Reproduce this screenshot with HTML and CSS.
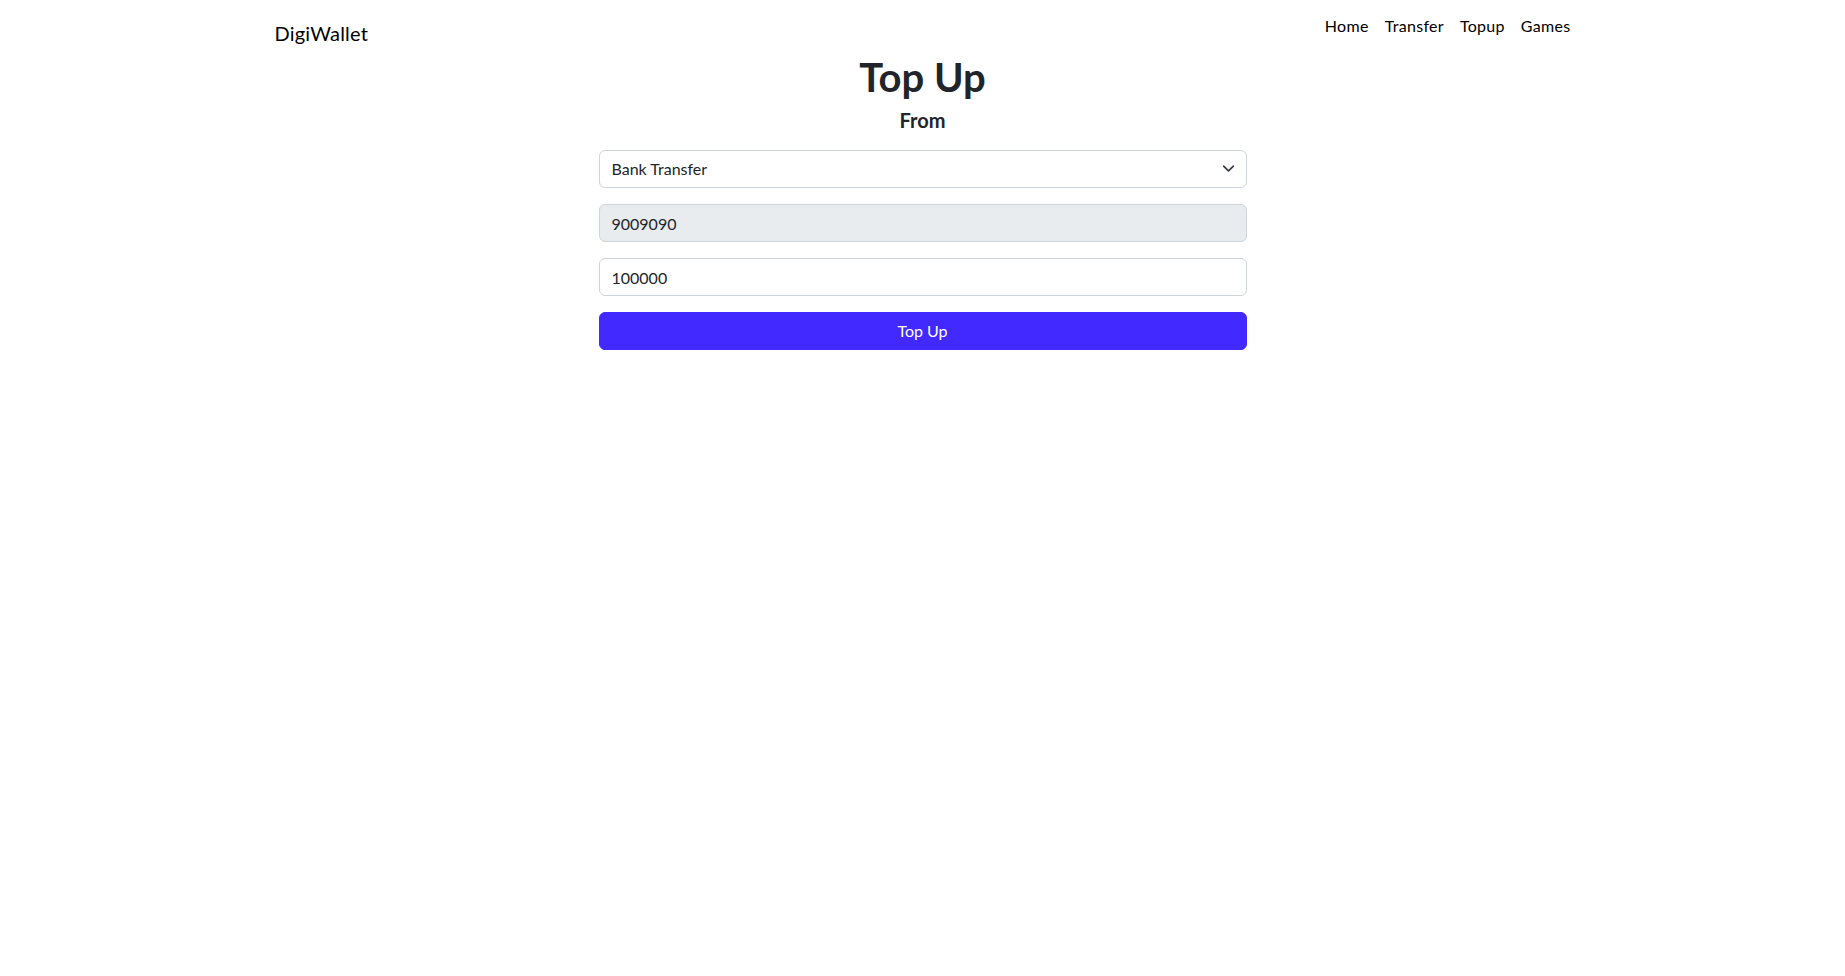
FILE: index.html
```html
<!DOCTYPE html>
<html lang="en">
<head>
<meta charset="utf-8">
<title>DigiWallet - Top Up</title>
<link rel="stylesheet" href="styles.css">
</head>
<body>
<header class="navbar">
  <div class="nav-inner">
    <a class="brand" href="#">DigiWallet</a>
    <nav class="nav-links">
      <a class="nav-link" href="#">Home</a>
      <a class="nav-link" href="#">Transfer</a>
      <a class="nav-link" href="#">Topup</a>
      <a class="nav-link" href="#">Games</a>
    </nav>
  </div>
</header>
<main class="page">
  <h1 class="title">Top Up</h1>
  <h5 class="subtitle">From</h5>
  <form class="topup-form">
    <div class="select-wrap">
      <select class="field field-select">
        <option>Bank Transfer</option>
      </select>
      <svg class="chevron" width="16" height="16" viewBox="0 0 16 16"><path d="M2 5l6 6 6-6" fill="none" stroke="#343a40" stroke-width="2" stroke-linecap="round" stroke-linejoin="round"/></svg>
    </div>
    <input class="field field-disabled" type="text" value="9009090" disabled>
    <input class="field" type="text" value="100000">
    <button class="btn-primary" type="button">Top Up</button>
  </form>
</main>
</body>
</html>
```
FILE: styles.css
```css
* { box-sizing: border-box; }
html, body { margin: 0; padding: 0; background: #fff; }
body {
  font-family: "Lato", "Open Sans", sans-serif;
  font-size: 16px;
  line-height: 1.5;
  color: #212529;
}
.navbar { padding: 10px 0 0; }
.nav-inner {
  width: 1296px;
  margin: 0 auto;
  display: flex;
  justify-content: space-between;
  align-items: flex-start;
}
.brand {
  font-size: 20px;
  line-height: 30px;
  padding-top: 8px;
  color: #000;
  text-decoration: none;
  letter-spacing: 0.2px;
}
.nav-links { display: flex; margin-right: -8px; }
.nav-link {
  padding: 4px 8px;
  color: #000;
  text-decoration: none;
  line-height: 24px;
  letter-spacing: 0.3px;
}
.page { text-align: center; }
.title {
  font-size: 40px;
  font-weight: 700;
  line-height: 48px;
  margin: 5px 0 0;
}
.subtitle {
  font-size: 20px;
  font-weight: 700;
  line-height: 24px;
  margin: 7px 0 18px;
}
.topup-form {
  width: 648px;
  margin: 0 auto;
  text-align: left;
}
.select-wrap { position: relative; margin-bottom: 16px; }
.field {
  display: block;
  width: 100%;
  height: 38px;
  padding: 6px 12px;
  font-family: inherit;
  font-size: 16px;
  line-height: 24px;
  color: #212529;
  background: #fff;
  border: 1px solid #ced4da;
  border-radius: 6px;
  margin: 0 0 16px;
  outline: none;
}
.field-select {
  appearance: none;
  -webkit-appearance: none;
  margin: 0;
  padding-right: 36px;
}
.chevron {
  position: absolute;
  right: 12px;
  top: 12px;
  width: 13px;
  height: 13px;
  pointer-events: none;
}
.field-disabled { background: #e9ecef; opacity: 1; }
.btn-primary {
  display: block;
  width: 100%;
  height: 38px;
  border: 1px solid #4229ff;
  background: #4229ff;
  color: #fff;
  border-radius: 6px;
  font-family: inherit;
  font-size: 16px;
  line-height: 24px;
  cursor: pointer;
}
```
